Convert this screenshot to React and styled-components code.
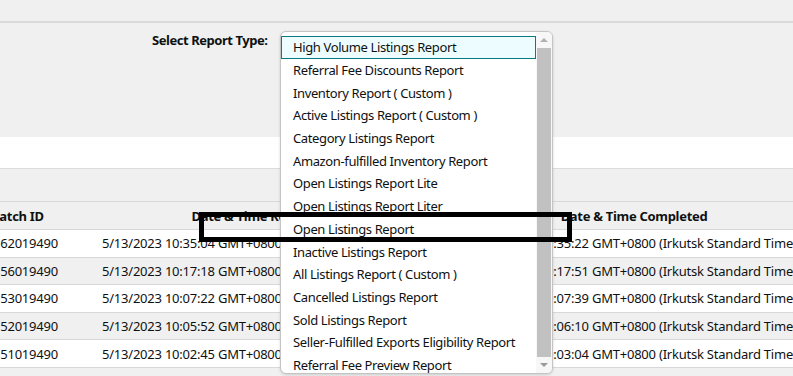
import React from 'react'
import styled, { createGlobalStyle } from 'styled-components'

const GlobalStyle = createGlobalStyle`
  html, body {
    margin: 0;
    padding: 0;
    background: #f0f0f0;
    overflow: hidden;
  }
  body {
    font-family: "Noto Sans", "Liberation Sans", sans-serif;
    font-size: 13px;
    color: #0f1111;
  }
`;

const Page = styled.div`
  position: relative;
  width: 793px;
  height: 376px;
  overflow: hidden;
  background: #f0f0f0;
`;

const TopStrip = styled.div`
  height: 21px;
  background: #f0f0f0;
  border-bottom: 2px solid #dadada;
`;

const FilterPanel = styled.div`
  height: 106px;
  padding: 8px 0 0 152px;
  display: flex;
  align-items: flex-start;
  gap: 13px;
  background: #f0f0f0;
`;

const Label = styled.label`
  width: 115px;
  font-weight: 700;
  line-height: 18px;
  letter-spacing: -0.45px;
  white-space: nowrap;
`;

const SelectAnchor = styled.div`
  position: relative;
  width: 273px;
  height: 24px;
`;

const ListBox = styled.div`
  position: absolute;
  top: 0;
  left: 0;
  z-index: 5;
  width: 273px;
  height: 343px;
  box-sizing: border-box;
  display: flex;
  background: #fff;
  border: 1px solid #c4c4c4;
  border-radius: 6px;
  box-shadow: 0 1px 3px rgba(0, 0, 0, 0.15);
  overflow: hidden;
`;

const Options = styled.ul`
  list-style: none;
  margin: 0;
  padding: 4px 0 0;
  flex: 1;
`;

const Option = styled.li`
  box-sizing: border-box;
  height: 22.7px;
  padding-left: 11px;
  display: flex;
  align-items: center;
  white-space: nowrap;
  letter-spacing: -0.38px;
  color: #0f1111;
  border: 1px solid ${p => (p.$active ? '#0a7a85' : 'transparent')};
  background: ${p => (p.$active ? '#edfdff' : 'transparent')};
`;

const ScrollBar = styled.div`
  width: 16px;
  display: flex;
  flex-direction: column;
  align-items: center;
  background: #f7f7f7;
`;

const Arrow = styled.div`
  height: 16px;
  width: 16px;
  display: flex;
  align-items: center;
  justify-content: center;
  &::after {
    content: '';
    border-left: 4px solid transparent;
    border-right: 4px solid transparent;
    ${p => (p.$down ? 'border-top: 4px solid #9a9a9a;' : 'border-bottom: 4px solid #b0b0b0;')}
  }
`;

const Thumb = styled.div`
  flex: 1;
  width: 14px;
  background: #c1c1c1;
`;

const WhiteBand = styled.div`
  height: 31px;
  background: #fff;
  border-bottom: 1px solid #dcdcdc;
`;

const Toolbar = styled.div`
  height: 32px;
  background: #f0f0f0;
  border-bottom: 1px solid #d8d8d8;
`;

const Table = styled.div`
  margin-left: -9px;
  width: 809px;
`;

const Row = styled.div`
  display: grid;
  grid-template-columns: 105px 336px 36px 332px;
  align-items: center;
  box-sizing: border-box;
  height: ${p => (p.$head ? '28px' : '27.6px')};
  background: ${p => (p.$shade ? '#f0f0f0' : '#fff')};
  border-bottom: 1px solid #d8d8d8;
  font-weight: ${p => (p.$head ? 700 : 400)};
  letter-spacing: ${p => (p.$head ? '-0.3px' : '-0.22px')};
  white-space: nowrap;
`;

const Cell = styled.div`
  overflow: hidden;
  padding-left: ${p => p.$pad || 0}px;
  text-align: ${p => (p.$center ? 'center' : 'left')};
`;

const Marker = styled.div`
  position: absolute;
  left: 199px;
  top: 212px;
  width: 373px;
  height: 30px;
  box-sizing: border-box;
  border: 5px solid #000;
  z-index: 10;
`;

const reportTypes = [
  'High Volume Listings Report',
  'Referral Fee Discounts Report',
  'Inventory Report ( Custom )',
  'Active Listings Report ( Custom )',
  'Category Listings Report',
  'Amazon-fulfilled Inventory Report',
  'Open Listings Report Lite',
  'Open Listings Report Liter',
  'Open Listings Report',
  'Inactive Listings Report',
  'All Listings Report ( Custom )',
  'Cancelled Listings Report',
  'Sold Listings Report',
  'Seller-Fulfilled Exports Eligibility Report',
  'Referral Fee Preview Report',
]

const batches = [
  { id: '5162019490', requested: '10:35:04', completed: '10:35:22' },
  { id: '5156019490', requested: '10:17:18', completed: '10:17:51' },
  { id: '5153019490', requested: '10:07:22', completed: '10:07:39' },
  { id: '5152019490', requested: '10:05:52', completed: '10:06:10' },
  { id: '5151019490', requested: '10:02:45', completed: '10:03:04' },
]

const stamp = t => `5/13/2023 ${t} GMT+0800 (Irkutsk Standard Time)`

const App = () => {
  return (
    <Page>
      <GlobalStyle />
      <TopStrip />
      <FilterPanel>
        <Label>Select Report Type:</Label>
        <SelectAnchor>
          <ListBox>
            <Options>
              {reportTypes.map((r, i) => (
                <Option key={r} $active={i === 0}>{r}</Option>
              ))}
            </Options>
            <ScrollBar>
              <Arrow />
              <Thumb />
              <Arrow $down />
            </ScrollBar>
          </ListBox>
        </SelectAnchor>
      </FilterPanel>
      <WhiteBand />
      <Toolbar />
      <Table>
        <Row $head $shade>
          <Cell>Batch ID</Cell>
          <Cell $center>Date &amp; Time Requested</Cell>
          <Cell>Status</Cell>
          <Cell $center>Date &amp; Time Completed</Cell>
        </Row>
        {batches.map((b, i) => (
          <Row key={b.id} $shade={i % 2 === 1}>
            <Cell $pad={2}>{b.id.slice(1)}</Cell>
            <Cell $pad={6}>{stamp(b.requested)}</Cell>
            <Cell />
            <Cell $pad={8}>{stamp(b.completed)}</Cell>
          </Row>
        ))}
      </Table>
      <Marker />
    </Page>
  )
}

export default App
